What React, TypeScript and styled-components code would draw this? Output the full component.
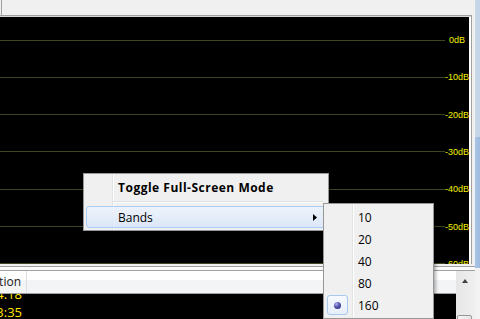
import React from "react";
import styled, { createGlobalStyle } from "styled-components";

const Global = createGlobalStyle`
  html, body { margin: 0; padding: 0; background: #f0f0f0; }
  body { width: 480px; height: 319px; overflow: hidden; font-family: "Open Sans", "Noto Sans", sans-serif; }
  #root { width: 480px; height: 319px; }
  * { box-sizing: border-box; }
`;

const Screen = styled.div`
  position: relative;
  width: 480px;
  height: 319px;
  overflow: hidden;
  display: flex;
  background: #f0f0f0;
`;

const MainColumn = styled.div`
  width: 475px;
  display: flex;
  flex-direction: column;
`;

const TopBar = styled.div`
  height: 15px;
  flex-shrink: 0;
  margin-left: 1px;
  border-left: 1px solid #a0a0a0;
  background: #f0f0f0;
`;

const SpectrumFrame = styled.div`
  flex-shrink: 0;
  margin-right: 3px;
  border-top: 1px solid #a0a0a0;
  border-right: 1px solid #a0a0a0;
  padding: 1px 2px 0 0;
  background: linear-gradient(#d4d4d4 0 1px, #ffffff 1px);
`;

const Spectrum = styled.div`
  height: 247px;
  background: #000;
  overflow: hidden;
  display: flex;
  flex-direction: column;
  gap: 27.333px;
  padding-top: 18px;
`;

const GridRow = styled.div`
  display: flex;
  align-items: center;
  height: 10px;
  flex-shrink: 0;
`;

const GridLine = styled.div`
  flex: 1;
  height: 1px;
  background: #3c4822;
`;

const GridLabel = styled.div`
  width: 24px;
  flex-shrink: 0;
  text-align: center;
  font-family: "Liberation Sans", Arial, sans-serif;
  font-size: 9px;
  line-height: 10px;
  color: #f4f200;
  white-space: nowrap;
`;

const Splitter = styled.div`
  flex-shrink: 0;
  height: 3px;
  margin-top: 2px;
  border-top: 1px solid #a0a0a0;
  border-bottom: 1px solid #a0a0a0;
  background: #fafafa;
  box-sizing: content-box;
`;

const ListArea = styled.div`
  flex: 1;
  display: flex;
  min-height: 0;
  overflow: hidden;
`;

const ListView = styled.div`
  width: 456px;
  display: flex;
  flex-direction: column;
  overflow: hidden;
`;

const ListHeader = styled.div`
  height: 23px;
  flex-shrink: 0;
  display: flex;
  border-bottom: 1px solid #a0a0a0;
  background: linear-gradient(#ffffff 0 9px, #f3f4f5 9px);
`;

const HeaderCell = styled.div<{ $w: number }>`
  width: ${(p) => p.$w}px;
  display: flex;
  justify-content: flex-end;
  overflow: hidden;
  padding-right: 5px;
  border-right: 1px solid #dedede;
  font-size: 12px;
  line-height: 22px;
  color: #1a1a1a;
  white-space: nowrap;
`;

const ListBody = styled.div`
  flex: 1;
  min-height: 0;
  background: #000;
  overflow: hidden;
`;

const ListRows = styled.div`
  margin-top: -9px;
`;

const ListRow = styled.div`
  display: flex;
  height: 18px;
`;

const TimeCell = styled.div`
  width: 22px;
  display: flex;
  justify-content: flex-end;
  overflow: hidden;
  font-size: 13px;
  line-height: 18px;
  color: #ffe400;
  white-space: nowrap;
`;

const Scrollbar = styled.div`
  width: 19px;
  display: flex;
  flex-direction: column;
  overflow: hidden;
  background: linear-gradient(to right, #e6e6e6, #efefef);
`;

const ScrollButton = styled.div`
  height: 19px;
  flex-shrink: 0;
  display: flex;
  align-items: center;
  justify-content: center;
  padding-right: 1px;
`;

const UpArrow = styled.div`
  width: 0;
  height: 0;
  border-left: 3.5px solid transparent;
  border-right: 3.5px solid transparent;
  border-bottom: 4px solid #404040;
`;

const ScrollTrack = styled.div`
  flex: 1;
  min-height: 0;
  padding: 25px 3px 0 1px;
`;

const Thumb = styled.div`
  height: 30px;
  border: 1px solid #979797;
  border-radius: 2px;
  background: linear-gradient(to right, #f6f6f6, #e4e4e4);
`;

const RightStrip = styled.div`
  width: 5px;
  display: flex;
  flex-direction: column;
`;

const StripPart = styled.div<{ $h?: number; $c: string }>`
  height: ${(p) => (p.$h ? `${p.$h}px` : "auto")};
  flex: ${(p) => (p.$h ? "none" : "1")};
  background: ${(p) => p.$c};
`;

const Menu = styled.div<{ $x: number; $y: number; $w: number }>`
  position: absolute;
  left: ${(p) => p.$x}px;
  top: ${(p) => p.$y}px;
  width: ${(p) => p.$w}px;
  padding: 2px;
  border: 1px solid #979797;
  background: linear-gradient(
      to right,
      transparent 28px,
      #e2e3e3 28px,
      #e2e3e3 29px,
      #ffffff 29px,
      #ffffff 30px,
      transparent 30px
    ),
    #f0f0f0;
  box-shadow: 3px 3px 3px -1px rgba(0, 0, 0, 0.3);
  font-size: 12px;
  color: #000;
`;

const MenuItem = styled.div<{ $hot?: boolean; $bold?: boolean; $pad: number }>`
  height: 22px;
  display: flex;
  align-items: center;
  padding-left: ${(p) => p.$pad}px;
  padding-right: 8px;
  border: 1px solid ${(p) => (p.$hot ? "#a9cdf4" : "transparent")};
  border-radius: 3px;
  background: ${(p) =>
    p.$hot
      ? "linear-gradient(rgba(236,243,253,0.8), rgba(214,230,250,0.8))"
      : "transparent"};
  font-weight: ${(p) => (p.$bold ? 700 : 400)};
  letter-spacing: ${(p) => (p.$bold ? "0.5px" : "0")};
  white-space: nowrap;
`;

const ItemLabel = styled.span`
  flex: 1;
`;

const SubArrow = styled.svg`
  width: 4px;
  height: 7px;
  flex-shrink: 0;
`;

const MenuSeparator = styled.div`
  height: 1px;
  margin: 3px 3px 3px 27px;
  background: #e0e0e0;
  border-bottom: 1px solid #ffffff;
  box-sizing: content-box;
`;

const CheckArea = styled.div<{ $on?: boolean }>`
  width: 21px;
  height: 20px;
  flex-shrink: 0;
  margin-right: 10px;
  display: flex;
  align-items: center;
  justify-content: center;
  border: 1px solid ${(p) => (p.$on ? "#a8c9ee" : "transparent")};
  border-radius: 3px;
  background: ${(p) => (p.$on ? "linear-gradient(#f6f9fd, #e6eef9)" : "transparent")};
`;

const Bullet = styled.div`
  width: 7px;
  height: 7px;
  border-radius: 50%;
  background: radial-gradient(circle at 35% 30%, #b4b4ec 0, #5252b0 45%, #26266e 100%);
`;

const dbLabels = ["0dB", "-10dB", "-20dB", "-30dB", "-40dB", "-50dB", "-60dB"];
const bands = [10, 20, 40, 80, 160];

export default function App() {
  return (
    <>
      <Global />
      <Screen>
        <MainColumn>
          <TopBar />
          <SpectrumFrame>
            <Spectrum>
              {dbLabels.map((l) => (
                <GridRow key={l}>
                  <GridLine />
                  <GridLabel>{l}</GridLabel>
                </GridRow>
              ))}
            </Spectrum>
          </SpectrumFrame>
          <Splitter />
          <ListArea>
            <ListView>
              <ListHeader>
                <HeaderCell $w={27}>Duration</HeaderCell>
              </ListHeader>
              <ListBody>
                <ListRows>
                  <ListRow>
                    <TimeCell>4:18</TimeCell>
                  </ListRow>
                  <ListRow>
                    <TimeCell>3:35</TimeCell>
                  </ListRow>
                </ListRows>
              </ListBody>
            </ListView>
            <Scrollbar>
              <ScrollButton>
                <UpArrow />
              </ScrollButton>
              <ScrollTrack>
                <Thumb />
              </ScrollTrack>
            </Scrollbar>
          </ListArea>
        </MainColumn>
        <RightStrip>
          <StripPart $h={137} $c="linear-gradient(to right, #cbd8e8, #c2d3e8)" />
          <StripPart $h={131} $c="linear-gradient(to right, #aac4e4, #9dbbe0)" />
          <StripPart $c="#f2f2f2" />
        </RightStrip>

        <Menu $x={83} $y={173} $w={246}>
          <MenuItem $bold $pad={31}>
            <ItemLabel>Toggle Full-Screen Mode</ItemLabel>
          </MenuItem>
          <MenuSeparator />
          <MenuItem $hot $pad={31}>
            <ItemLabel>Bands</ItemLabel>
            <SubArrow viewBox="0 0 4 7">
              <polygon points="0,0 4,3.5 0,7" fill="#000" />
            </SubArrow>
          </MenuItem>
        </Menu>

        <Menu $x={323} $y={203} $w={111}>
          {bands.map((b) => (
            <MenuItem key={b} $pad={0}>
              <CheckArea $on={b === 160}>{b === 160 && <Bullet />}</CheckArea>
              <ItemLabel>{b}</ItemLabel>
            </MenuItem>
          ))}
        </Menu>
      </Screen>
    </>
  );
}
